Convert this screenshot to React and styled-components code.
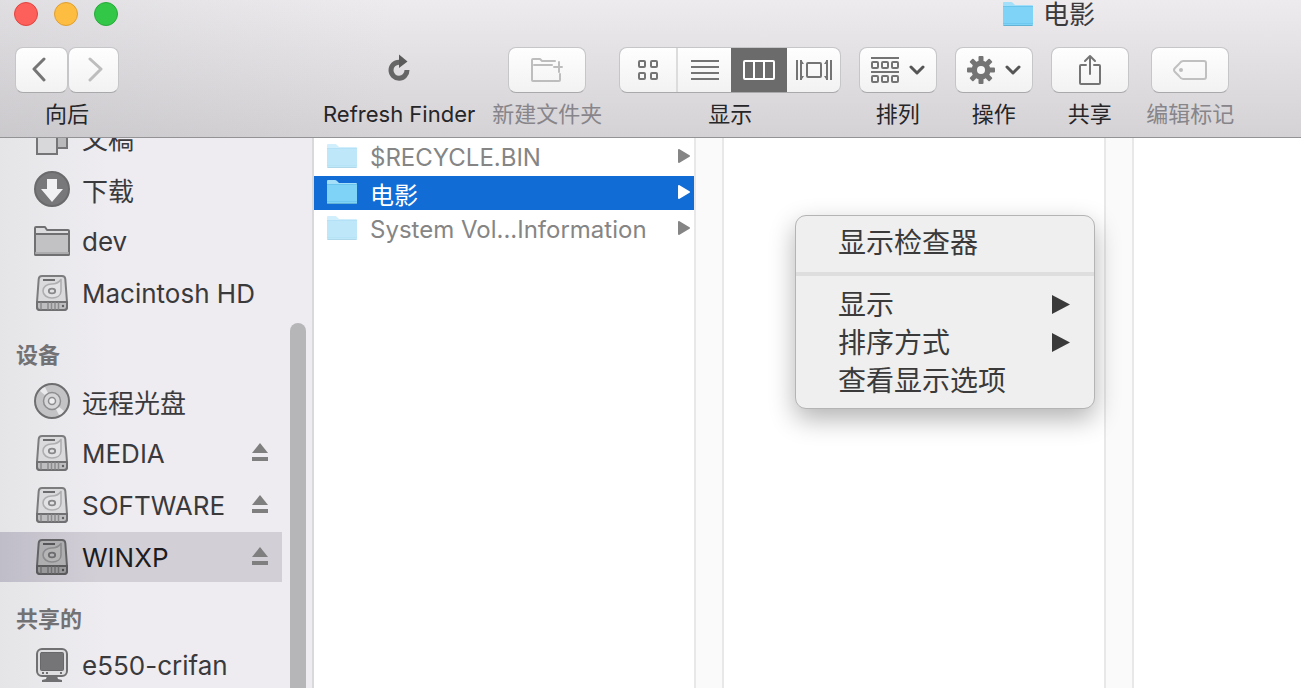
import React, { useState } from "react";
import styled, { createGlobalStyle } from "styled-components";

const VIEWS = [
  { id: "icons", label: "图标", width: 58, Icon: GridIcon },
  { id: "list", label: "列表", width: 53, Icon: ListIcon },
  { id: "columns", label: "分栏", width: 56, Icon: ColumnsIcon },
  { id: "flow", label: "Cover Flow", width: 53, Icon: FlowIcon },
];

const SIDEBAR = [
  {
    items: [
      { name: "文稿", Icon: DocumentsIcon },
      { name: "下载", Icon: DownloadIcon },
      { name: "dev", Icon: FolderIcon },
      { name: "Macintosh HD", Icon: DriveIcon },
    ],
  },
  {
    title: "设备",
    items: [
      { name: "远程光盘", Icon: DiscIcon },
      { name: "MEDIA", Icon: DriveIcon, eject: true },
      { name: "SOFTWARE", Icon: DriveIcon, eject: true },
      { name: "WINXP", Icon: DriveIcon, eject: true },
    ],
  },
  {
    title: "共享的",
    items: [{ name: "e550-crifan", Icon: ComputerIcon }],
  },
];

const FILES = [
  { name: "$RECYCLE.BIN", hidden: true },
  { name: "电影" },
  { name: "System Vol...Information", hidden: true },
];

export default function App() {
  const [view, setView] = useState("columns");
  const [place, setPlace] = useState("WINXP");
  const [file, setFile] = useState("电影");

  return (
    <Window>
      <GlobalStyle />
      <Header>
        <TitleBar>
          <Lights>
            <Light $color="#fd5f5b" $edge="#e0443f" aria-label="关闭" />
            <Light $color="#fdbd40" $edge="#de9f34" aria-label="最小化" />
            <Light $color="#33c748" $edge="#27a93a" aria-label="缩放" />
          </Lights>
          <Title>
            <BlueFolder />
            电影
          </Title>
        </TitleBar>
        <Toolbar>
          <Tool>
            <NavButtons>
              <ToolButton id="back" $width={53}>
                <Svg w={20} h={26} stroke="#757575" sw={3}>
                  <path d="M12 2 2 12l10 11" />
                </Svg>
              </ToolButton>
              <ToolButton $width={51} aria-label="向前" disabled>
                <Svg w={20} h={26} stroke="#bdbdbd" sw={3}>
                  <path d="m6 2 11 10L6 23" />
                </Svg>
              </ToolButton>
            </NavButtons>
            <ToolLabel htmlFor="back">向后</ToolLabel>
          </Tool>
          <Space />
          <Tool>
            <PlainButton id="refresh">
              <Svg w={24} h={28} stroke="#666" sw={5}>
                <path d="M12 8.2A8 8 0 1 0 20 16" strokeLinecap="butt" />
                <path d="M12 0.5 20.5 7.5 12 14z" fill="#5b5b5b" stroke="none" />
              </Svg>
            </PlainButton>
            <ToolLabel htmlFor="refresh">Refresh Finder</ToolLabel>
          </Tool>
          <Tool>
            <ToolButton id="new-folder" $width={78} disabled>
              <Svg w={32} h={26} stroke="#bdbdbd" sw={2}>
                <path d="M24 4H11L9 2H2Q1 2 1 3v20q0 1 1 1h26q1 0 1-1v-6M3 8h18M28 5v10M23 10h8" />
              </Svg>
            </ToolButton>
            <ToolLabel htmlFor="new-folder" $dim>
              新建文件夹
            </ToolLabel>
          </Tool>
          <Tool>
            <Segments role="group" aria-labelledby="view-label">
              {VIEWS.map(({ id, label, width, Icon }) => (
                <Segment
                  key={id}
                  $width={width}
                  $active={view === id}
                  aria-label={label}
                  aria-pressed={view === id}
                  onClick={() => setView(id)}
                >
                  <Icon />
                </Segment>
              ))}
            </Segments>
            <ToolLabel as="span" id="view-label">
              显示
            </ToolLabel>
          </Tool>
          <Tool>
            <ToolButton id="arrange" $width={78}>
              <ArrangeIcon />
              <Chevron />
            </ToolButton>
            <ToolLabel htmlFor="arrange">排列</ToolLabel>
          </Tool>
          <Tool>
            <ToolButton id="action" $width={78}>
              <GearIcon />
              <Chevron />
            </ToolButton>
            <ToolLabel htmlFor="action">操作</ToolLabel>
          </Tool>
          <Tool>
            <ToolButton id="share" $width={78}>
              <Svg w={24} h={32} stroke="#747474" sw={2}>
                <path d="M8 11H3q-1 0-1 1v17q0 1 1 1h18q1 0 1-1V12q0-1-1-1h-5" />
                <path d="M12 20V2M7 7l5-5 5 5" />
              </Svg>
            </ToolButton>
            <ToolLabel htmlFor="share">共享</ToolLabel>
          </Tool>
          <Tool>
            <ToolButton id="tags" $width={78} disabled>
              <Svg w={36} h={22} stroke="#c0c0c0" sw={2}>
                <path d="M11 2h21q2 0 2 2v14q0 2-2 2H11q-2 0-4-3l-4-4q-2-2 0-4l4-4q2-3 4-3z" />
                <circle cx="9" cy="11" r="2" fill="#bdbdbd" stroke="none" />
              </Svg>
            </ToolButton>
            <ToolLabel htmlFor="tags" $dim>
              编辑标记
            </ToolLabel>
          </Tool>
        </Toolbar>
      </Header>

      <Body>
        <Sidebar>
          <Places>
            {SIDEBAR.map((group, i) => (
              <React.Fragment key={i}>
                {group.title && <GroupTitle>{group.title}</GroupTitle>}
                {group.items.map(({ name, Icon, eject }) => (
                  <Place key={name} $active={place === name}>
                    <PlaceButton
                      $active={place === name}
                      onClick={() => setPlace(name)}
                    >
                      <Icon />
                      {name}
                    </PlaceButton>
                    {eject && (
                      <Eject aria-label={`推出 ${name}`}>
                        <Svg w={18} h={20}>
                          <path d="M9 0 17 10H1z" fill="#7f7f7f" />
                          <path d="M1 14h16v4H1z" fill="#7f7f7f" />
                        </Svg>
                      </Eject>
                    )}
                  </Place>
                ))}
              </React.Fragment>
            ))}
          </Places>
          <ScrollTrack>
            <ScrollThumb />
          </ScrollTrack>
        </Sidebar>
        <Columns>
          <Column>
            {FILES.map(({ name, hidden }) => (
              <FileRow
                key={name}
                $active={file === name}
                onClick={() => setFile(name)}
              >
                <BlueFolder faded={hidden} />
                <FileName>{name}</FileName>
                <Svg w={12} h={16}>
                  <path
                    d="M1 1v12l10-6z"
                    fill="currentColor"
                    stroke="currentColor"
                    strokeWidth="2"
                    strokeLinejoin="round"
                  />
                </Svg>
              </FileRow>
            ))}
          </Column>
          <Gutter />
          <Column />
          <Gutter />
          <LastColumn />
          <Menu role="menu">
            <MenuItem role="menuitem">显示检查器</MenuItem>
            <MenuLine />
            <MenuItem role="menuitem">
              显示
              <MenuArrow />
            </MenuItem>
            <MenuItem role="menuitem">
              排序方式
              <MenuArrow />
            </MenuItem>
            <MenuItem role="menuitem">查看显示选项</MenuItem>
          </Menu>
        </Columns>
      </Body>
    </Window>
  );
}

function Svg({ w, h, stroke = "none", sw, children }) {
  return (
    <svg
      width={w}
      height={h}
      viewBox={`0 0 ${w} ${h}`}
      fill="none"
      stroke={stroke}
      strokeWidth={sw}
      strokeLinecap="round"
      strokeLinejoin="round"
      aria-hidden="true"
    >
      {children}
    </svg>
  );
}

function GridIcon() {
  return (
    <Svg w={20} h={20} stroke="#747474" sw={2}>
      <rect x="1" y="1" width="6" height="6" rx="1" />
      <rect x="13" y="1" width="6" height="6" rx="1" />
      <rect x="1" y="13" width="6" height="6" rx="1" />
      <rect x="13" y="13" width="6" height="6" rx="1" />
    </Svg>
  );
}

function ListIcon() {
  return (
    <Svg w={28} h={20}>
      <path
        d="M0 1h28M0 7h28M0 13h28M0 19h28"
        stroke="#747474"
        strokeWidth="2"
        strokeLinecap="butt"
      />
    </Svg>
  );
}

function ColumnsIcon() {
  return (
    <Svg w={32} h={20} stroke="#fff" sw={2}>
      <rect x="1" y="1" width="30" height="18" rx="1" />
      <path d="M11 1v18M21 1v18" />
    </Svg>
  );
}

function FlowIcon() {
  return (
    <Svg w={36} h={20}>
      <g stroke="#747474" strokeWidth="2" strokeLinecap="butt">
        <path d="M1 0v20M35 0v20" />
        <path d="M5 0v20M31 0v20" />
        <rect x="11" y="3" width="14" height="14" rx="1" />
      </g>
      <path d="M6 1l2 3H6zM6 19l2-3H6zM30 1l-2 3h2zM30 19l-2-3h2z" fill="#747474" />
    </Svg>
  );
}

function ArrangeIcon() {
  return (
    <Svg w={28} h={26} stroke="#747474" sw={2}>
      <path d="M0 1h28M0 15h28" strokeLinecap="butt" />
      {[5, 19].map((y) =>
        [1, 11, 21].map((x) => (
          <rect key={`${x}-${y}`} x={x} y={y} width="6" height="6" rx="1" />
        ))
      )}
    </Svg>
  );
}

function GearIcon() {
  return (
    <Svg w={28} h={28}>
      {[0, 45, 90, 135].map((deg) => (
        <rect
          key={deg}
          x="11.5"
          y="0"
          width="5"
          height="28"
          rx="1"
          fill="#747474"
          transform={`rotate(${deg} 14 14)`}
        />
      ))}
      <circle cx="14" cy="14" r="9.5" fill="#747474" />
      <circle cx="14" cy="14" r="4" fill="#f8f8f8" />
    </Svg>
  );
}

function Chevron() {
  return (
    <Svg w={16} h={10} stroke="#555" sw={3}>
      <path d="m2 2 6 6 6-6" />
    </Svg>
  );
}

function MenuArrow() {
  return (
    <Svg w={18} h={20}>
      <path d="M0 0v19l18-9.500z" fill="#3a3a3a" />
    </Svg>
  );
}

function BlueFolder({ faded }) {
  return (
    <FolderSvg
      width="30"
      height="26"
      viewBox="0 0 30 26"
      $faded={faded}
      aria-hidden="true"
    >
      <path d="M0 23V1q0-1 1-1h7q1 0 2 1l2 2h17q1 0 1 1v19z" fill="#a3dff8" />
      <path d="M0 5h30v17q0 2-1 2H1q-1 0-1-2z" fill="#7fd3f7" />
      <path d="M0 4.5h30" stroke="#6cc5ec" />
      <path d="M0 21.5h30" stroke="#6fc8ef" />
      <path d="M0.5 23.5h29" stroke="#62b2d6" />
    </FolderSvg>
  );
}

function DocumentsIcon() {
  return (
    <Svg w={36} h={36} stroke="#757578" sw={2}>
      <path d="M15 5h18v24H15z" fill="#b9b9bb" strokeLinejoin="miter" />
      <path d="M3 9h20v26H3z" fill="#d8d8da" strokeLinejoin="miter" />
    </Svg>
  );
}

function DownloadIcon() {
  return (
    <Svg w={36} h={36}>
      <circle cx="18" cy="18" r="17" fill="#78787a" stroke="#6a6a6c" strokeWidth="2" />
      <path d="M13 8h10v10h6L18 31 7 18h6z" fill="#f1f0f3" />
    </Svg>
  );
}

function FolderIcon() {
  return (
    <Svg w={36} h={30} stroke="#707073" sw={2}>
      <path d="M1 28V2q0-1 1-1h9l2 3h21q1 0 1 1v23q0 1-1 1H2q-1 0-1-1z" fill="#dcdcde" />
      <path d="M1 8h34v20q0 1-1 1H2q-1 0-1-1z" fill="#c2c2c4" />
      <path d="M2 27h32" stroke="#acacae" />
    </Svg>
  );
}

function DriveIcon() {
  return (
    <Svg w={36} h={36}>
      <g transform="translate(2 0)">
        <path
          d="M6 1h20q3 0 3.300 3L31 27v5q0 3-3 3H4q-3 0-3-3v-5L2.700 4Q3 1 6 1z"
          fill="#dadadc"
          stroke="#7c7c7f"
          strokeWidth="2"
        />
        <path d="M7 5h12" stroke="#6c6c6f" strokeWidth="2" strokeLinecap="butt" />
        <path
          d="M25 4.500V16c0 4.500-4 7-9 7s-9-3-9-7c0-4.500 4-7 8.500-7 4 0 7.500-1.500 9.500-4.500z"
          fill="#e2e2e4"
          stroke="#aeaeb1"
          strokeWidth="1.600"
        />
        <ellipse cx="16" cy="16" rx="3.200" ry="2.400" stroke="#88888b" strokeWidth="1.800" />
        <path d="M1 27h30v5q0 3-3 3H4q-3 0-3-3z" fill="#bebec0" stroke="#707073" strokeWidth="2" />
        <path d="M5 28v6M12 28v6M15.500 28v6M19 28v6M22.500 28v6" stroke="#8c8c8f" strokeWidth="1.500" />
        <circle cx="27" cy="31" r="1.200" fill="#606063" />
      </g>
    </Svg>
  );
}

function DiscIcon() {
  return (
    <Svg w={36} h={36}>
      <circle cx="18" cy="18" r="17" fill="#c3c3c5" stroke="#6e6e70" strokeWidth="2" />
      <path d="M18 18 6 8q2-3 5-4zM18 18l12 10q-2 3-5 4z" fill="#e9e9eb" />
      <circle cx="18" cy="18" r="8.500" fill="#d6d6d8" stroke="#8d8d90" strokeWidth="1.500" />
      <circle cx="18" cy="18" r="3.500" fill="#eeeef0" stroke="#8d8d90" strokeWidth="1.500" />
    </Svg>
  );
}

function ComputerIcon() {
  return (
    <Svg w={36} h={34}>
      <rect x="3" y="1" width="30" height="27" rx="5" fill="#dedee0" stroke="#707073" strokeWidth="2" />
      <rect x="6.500" y="4.500" width="23" height="18" rx="1" fill="#757577" stroke="#68686a" />
      <path d="M8 25h2M12 25h2M26 25h2" stroke="#707073" strokeWidth="2" strokeLinecap="butt" />
      <path d="M13 28h10l1 3 4 1v2H8v-2l4-1z" fill="#707073" />
    </Svg>
  );
}

const GlobalStyle = createGlobalStyle`
  * {
    box-sizing: border-box;
  }
  body {
    margin: 0;
    font-family: Inter, "Noto Sans CJK SC", sans-serif;
  }
  button {
    padding: 0;
    border: 0;
    background: none;
    color: inherit;
    font: inherit;
  }
  svg {
    display: block;
    flex: none;
  }
`;

const Window = styled.div`
  display: flex;
  flex-direction: column;
  height: 100vh;
  overflow: hidden;
  background: #fff;
`;

const Header = styled.header`
  flex: none;
  border-bottom: 1px solid #939294;
  background:
    linear-gradient(90deg, rgba(150, 150, 155, 0.15), rgba(150, 150, 155, 0) 30%),
    linear-gradient(#edebee, #d4d2d5);
`;

const TitleBar = styled.div`
  display: flex;
  height: 30px;
  padding: 0 0 0 14px;
`;

const Lights = styled.div`
  display: flex;
  flex: none;
  gap: 16px;
  padding-top: 2px;
`;

const Light = styled.button`
  width: 24px;
  height: 24px;
  border: 1px solid ${(props) => props.$edge};
  border-radius: 50%;
  background: ${(props) => props.$color};
`;

const Title = styled.h1`
  display: flex;
  align-items: center;
  gap: 10px;
  margin: 0 0 0 885px;
  font-size: 26px;
  font-weight: 400;
  line-height: 30px;
  white-space: nowrap;
  color: #3b3a3d;
`;

const Toolbar = styled.div`
  display: flex;
  gap: 17px;
  padding: 17px 15px 8px;
`;

const Tool = styled.div`
  display: flex;
  flex: none;
  flex-direction: column;
  align-items: center;
  gap: 5px;
  min-width: 79px;
`;

const Space = styled.div`
  flex: none;
  width: 170px;
`;

const ToolLabel = styled.label`
  font-size: 22px;
  line-height: 32px;
  height: 31px;
  white-space: nowrap;
  color: ${(props) => (props.$dim ? "#87858a" : "#262528")};
`;

const NavButtons = styled.div`
  display: flex;
`;

const ToolButton = styled.button`
  display: flex;
  align-items: center;
  justify-content: center;
  gap: 10px;
  width: ${(props) => props.$width}px;
  height: 46px;
  border: 1px solid #c6c5c8;
  border-bottom-color: #a9a8ab;
  border-radius: 8px;
  background: linear-gradient(#fefefe, #f2f2f2);
`;

const PlainButton = styled.button`
  display: flex;
  align-items: center;
  height: 46px;
  padding-bottom: 4px;
`;

const Segments = styled.div`
  display: flex;
  overflow: hidden;
  height: 46px;
  border: 1px solid #c6c5c8;
  border-bottom-color: #a9a8ab;
  border-radius: 8px;
  background: linear-gradient(#fefefe, #f2f2f2);
`;

const Segment = styled.button`
  display: flex;
  align-items: center;
  justify-content: center;
  width: ${(props) => props.$width}px;
  background: ${(props) => (props.$active ? "#6b6b6b" : "none")};

  &:first-child {
    border-right: 2px solid #dcdcdc;
  }
`;

const Body = styled.div`
  display: flex;
  flex: 1;
  min-height: 0;
`;

const Sidebar = styled.nav`
  display: flex;
  flex: none;
  width: 314px;
  overflow: hidden;
  border-right: 2px solid #d9d8db;
  background: linear-gradient(90deg, #e5e5e8, #eeecf0 35%);
`;

const Places = styled.div`
  display: flex;
  flex: 1;
  flex-direction: column;
  gap: 2px;
  margin-top: -26px;
`;

const GroupTitle = styled.h2`
  flex: none;
  height: 54px;
  margin: 0;
  padding: 16px 16px 0;
  font-size: 22px;
  font-weight: 700;
  line-height: 38px;
  color: #727174;
`;

const Place = styled.div`
  display: flex;
  flex: none;
  align-items: center;
  height: 50px;
  padding-right: 13px;
  background: ${(props) =>
    props.$active ? "linear-gradient(90deg, #bfbdc8, #d3cfd7 35%)" : "none"};
`;

const PlaceButton = styled.button`
  display: flex;
  flex: 1;
  align-items: center;
  gap: 12px;
  height: 50px;
  padding-left: 34px;
  font-size: 26px;
  white-space: nowrap;
  color: ${(props) => (props.$active ? "#1d1c20" : "#3a393c")};

  svg {
    filter: ${(props) => (props.$active ? "brightness(0.8)" : "none")};
  }
`;

const Eject = styled.button`
  flex: none;
`;

const ScrollTrack = styled.div`
  flex: none;
  width: 30px;
  padding: 185px 6px 0 8px;
`;

const ScrollThumb = styled.div`
  height: 100%;
  border-radius: 8px 8px 0 0;
  background: #b6b5b8;
`;

const Columns = styled.main`
  position: relative;
  display: flex;
  flex: 1;
  min-width: 0;
`;

const Column = styled.div`
  display: flex;
  flex: none;
  flex-direction: column;
  gap: 2px;
  width: 380px;
  padding-top: 2px;
`;

const LastColumn = styled.div`
  flex: 1;
`;

const Gutter = styled.div`
  flex: none;
  width: 30px;
  border: solid #e8e8e8;
  border-width: 0 2px;
  background: #fafafa;
`;

const FileRow = styled.button`
  display: flex;
  flex: none;
  align-items: center;
  gap: 13px;
  height: 34px;
  padding: 0 4px 0 13px;
  font-size: 24px;
  text-align: left;
  color: ${(props) => (props.$active ? "#fff" : "#858585")};
  background: ${(props) => (props.$active ? "#116cd6" : "none")};
`;

const FileName = styled.span`
  flex: 1;
  white-space: nowrap;
`;

const FolderSvg = styled.svg`
  opacity: ${(props) => (props.$faded ? 0.5 : 1)};
`;

const Menu = styled.div`
  position: absolute;
  top: 77px;
  left: 481px;
  width: 300px;
  padding: 8px 0;
  border: 1px solid #b4b4b4;
  border-radius: 11px;
  background: #efefef;
  box-shadow: 0 10px 26px rgba(0, 0, 0, 0.3);
`;

const MenuItem = styled.button`
  display: flex;
  align-items: center;
  justify-content: space-between;
  width: 100%;
  height: 38px;
  padding: 0 24px 0 42px;
  font-size: 28px;
  line-height: 38px;
  color: #3a3a3a;
`;

const MenuLine = styled.hr`
  height: 4px;
  margin: 10px 0;
  border: 0;
  background: #dedede;
`;
